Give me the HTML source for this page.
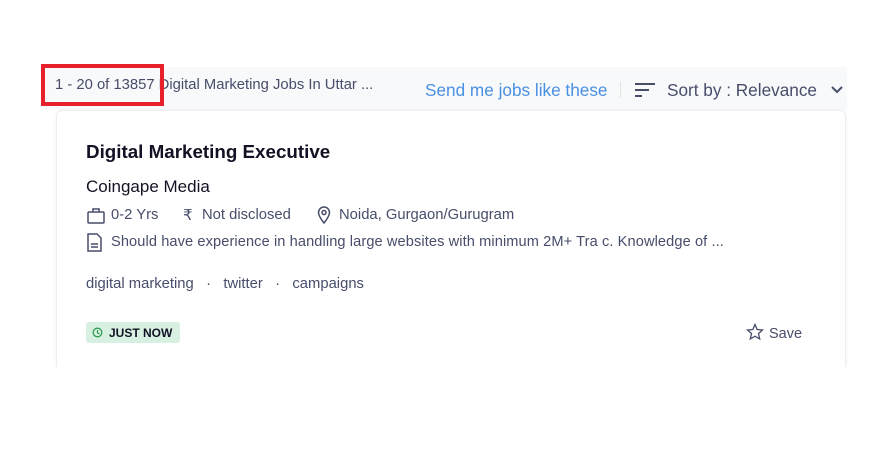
<!DOCTYPE html>
<html><head><style>
body{margin:0;width:890px;height:449px;background:#fff;font-family:"Liberation Sans",Arial,sans-serif;position:relative;overflow:hidden}
.band{position:absolute;left:42px;top:67px;width:805px;height:43px;background:#f8f9fa}
.cnt{position:absolute;left:55px;top:77px;font-size:14.8px;color:#474d6a;white-space:nowrap}
.red{position:absolute;left:41px;top:64px;width:115px;height:34px;border:4px solid #e8202a}
.send{position:absolute;left:425px;top:80px;font-size:17.2px;color:#4a90e2}
.sep{position:absolute;left:620px;top:82px;width:1px;height:16px;background:#dfe8e0}
.sort{position:absolute;left:667px;top:80px;font-size:17.2px;color:#474d6a}
.card{position:absolute;left:56px;top:110px;width:788px;height:270px;background:#fff;border:1px solid #eceef2;border-radius:6px;box-shadow:0 1px 3px rgba(0,0,0,.06)}
.t{position:absolute;left:86px;top:141px;font-size:18.8px;font-weight:bold;color:#121224}
.co{position:absolute;left:86px;top:177px;font-size:17px;color:#121224}
.meta{position:absolute;top:207px;font-size:14.8px;color:#474d6a;white-space:nowrap}
.tags{position:absolute;left:86px;top:276px;font-size:14.8px;color:#474d6a;white-space:nowrap}
.badge{position:absolute;left:86px;top:322px;width:94px;height:21px;background:#d7f0e1;border-radius:3px;font-size:12px;font-weight:bold;color:#121224}
.save{position:absolute;left:769px;top:326px;font-size:14.5px;color:#474d6a}
</style></head><body>
<div class="band"></div>
<div class="cnt">1 - 20 of 13857 Digital Marketing Jobs In Uttar ...</div>
<div class="red"></div>
<div class="send">Send me jobs like these</div>
<div class="sep"></div>
<svg style="position:absolute;left:634px;top:82px" width="22" height="16"><path d="M1 2h20M1 8h14M1 14h7" stroke="#474d6a" stroke-width="2"/></svg>
<div class="sort">Sort by : Relevance</div>
<svg style="position:absolute;left:830px;top:85px" width="14" height="10"><path d="M2 2l5 5 5-5" stroke="#474d6a" stroke-width="2" fill="none"/></svg>
<div class="card"></div>
<div class="t">Digital Marketing Executive</div>
<div class="co">Coingape Media</div>
<svg style="position:absolute;left:87px;top:207px" width="18" height="17"><rect x="1" y="5" width="16" height="11" rx="1" fill="none" stroke="#474d6a" stroke-width="1.5"/><path d="M6 5V2h6v3" fill="none" stroke="#474d6a" stroke-width="1.5"/></svg>
<div class="meta" style="left:111px">0-2 Yrs</div>
<div class="meta" style="left:183px">₹</div>
<div class="meta" style="left:202px">Not disclosed</div>
<svg style="position:absolute;left:317px;top:206px" width="14" height="18"><path d="M7 17C3 12 1.5 9 1.5 6.5a5.5 5.5 0 0111 0C12.5 9 11 12 7 17z" fill="none" stroke="#474d6a" stroke-width="1.5"/><circle cx="7" cy="6.5" r="2" fill="none" stroke="#474d6a" stroke-width="1.5"/></svg>
<div class="meta" style="left:339px">Noida, Gurgaon/Gurugram</div>
<svg style="position:absolute;left:87px;top:233px" width="15" height="19"><path d="M1 1h9l4 4v13H1z" fill="none" stroke="#474d6a" stroke-width="1.5"/><path d="M4 11h7M4 14h7" stroke="#474d6a" stroke-width="1.5"/></svg>
<div class="meta" style="left:111px;top:234px;font-size:14.6px;letter-spacing:0.1px">Should have experience in handling large websites with minimum 2M+ Tra c. Knowledge of ...</div>
<div class="tags">digital marketing &nbsp;&nbsp;·&nbsp;&nbsp; twitter &nbsp;&nbsp;·&nbsp;&nbsp; campaigns</div>
<div class="badge"><svg style="position:absolute;left:6px;top:5px" width="11" height="11"><circle cx="5.5" cy="5.5" r="4.3" fill="none" stroke="#2e9b4e" stroke-width="1.3"/><path d="M5.5 3v3l2 1" fill="none" stroke="#2e9b4e" stroke-width="1.2"/></svg><span style="position:absolute;left:23px;top:4px">JUST NOW</span></div>
<svg style="position:absolute;left:746px;top:323px" width="18" height="18"><path d="M9 1.5l2.2 5 5.3.5-4 3.6 1.2 5.3L9 13.2 4.3 15.9l1.2-5.3-4-3.6 5.3-.5z" fill="none" stroke="#474d6a" stroke-width="1.3"/></svg>
<div class="save">Save</div>
<div style="position:absolute;left:0;top:367px;width:890px;height:82px;background:#fff"></div>
</body></html>
